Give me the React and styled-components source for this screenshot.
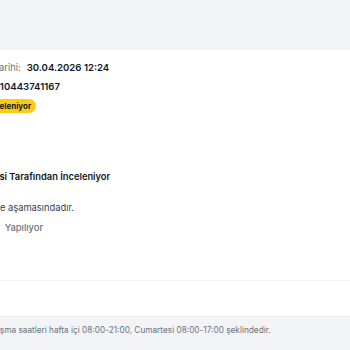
import React from "react";
import styled, { createGlobalStyle } from "styled-components";

const GlobalStyle = createGlobalStyle`
  body {
    margin: 0;
    background: #ffffff;
    font-family: Inter, "Noto Sans", "Liberation Sans", sans-serif;
  }
`;

const Page = styled.div`
  width: 350px;
  height: 350px;
  overflow: hidden;
  display: flex;
  flex-direction: column;
  background: #ffffff;
`;

const TopBar = styled.div`
  height: 50px;
  flex-shrink: 0;
  background: #f3f4f6;
`;

const Body = styled.div`
  height: 230px;
  flex-shrink: 0;
  margin-left: -45px;
  padding-top: 10px;
  box-sizing: border-box;
  display: flex;
  flex-direction: column;
`;

const InfoList = styled.div`
  display: flex;
  flex-direction: column;
  gap: 4px;
`;

const InfoRow = styled.div`
  display: flex;
  align-items: center;
  gap: ${(p) => p.$gap || 5}px;
  height: 15px;
  font-size: 9.33px;
  white-space: nowrap;
`;

const Label = styled.span`
  color: #6b7280;
`;

const Value = styled.span`
  color: #111827;
  font-size: 9.6px;
  font-weight: 600;
`;

const Badge = styled.span`
  display: inline-flex;
  align-items: center;
  height: 14px;
  padding: 0 5px;
  border-radius: 7px;
  background: #facc15;
  color: #111827;
  font-size: 8px;
  font-weight: 700;
`;

const Timeline = styled.div`
  margin-top: 56px;
  display: flex;
  gap: 6px;
  margin-left: -27px;
`;

const Marker = styled.div`
  width: 10px;
  height: 10px;
  margin-top: 2px;
  border-radius: 50%;
  background: #facc15;
  flex-shrink: 0;
`;

const Step = styled.div`
  display: flex;
  flex-direction: column;
  font-size: 9.33px;
  line-height: 15px;
  white-space: nowrap;
`;

const StepTitle = styled.div`
  color: #111827;
  font-weight: 600;
`;

const StepText = styled.div`
  margin-top: 16px;
  color: #374151;
`;

const StepStatus = styled.div`
  margin-top: 5px;
  display: flex;
  gap: 8px;
  color: #6b7280;
  font-weight: 500;
`;

const Divider = styled.div`
  height: 1px;
  flex-shrink: 0;
  background: #f3f4f6;
`;

const Actions = styled.div`
  height: 35px;
  flex-shrink: 0;
`;

const Footer = styled.div`
  flex: 1;
  background: #f3f4f6;
  border-top: 1px solid #eef0f3;
  padding-top: 8px;
  box-sizing: border-box;
  overflow: hidden;
`;

const FooterText = styled.p`
  margin: 0 0 0 -70px;
  font-size: 8.25px;
  line-height: 11px;
  color: #6b7280;
  white-space: nowrap;
`;

export default function App() {
  return (
    <>
      <GlobalStyle />
      <Page>
        <TopBar />
        <Body>
          <InfoList>
            <InfoRow $gap={6}>
              <Label>Başvuru Tarihi:</Label>
              <Value>30.04.2026 12:24</Value>
            </InfoRow>
            <InfoRow $gap={5}>
              <Label>Kayıt No:</Label>
              <Value>10443741167</Value>
            </InfoRow>
            <InfoRow $gap={2}>
              <Label>Statü:</Label>
              <Badge>İnceleniyor</Badge>
            </InfoRow>
          </InfoList>
          <Timeline>
            <Marker />
            <Step>
              <StepTitle>Teknik Servisi Tarafından İnceleniyor</StepTitle>
              <StepText>İade inceleme aşamasındadır.</StepText>
              <StepStatus>
                <span>Ön Kontrolü</span>
                <span>Yapılıyor</span>
              </StepStatus>
            </Step>
          </Timeline>
        </Body>
        <Divider />
        <Actions />
        <Footer>
          <FooterText>
            Çağrı merkezi çalışma saatleri hafta içi 08:00-21:00, Cumartesi
            08:00-17:00 şeklindedir.
          </FooterText>
        </Footer>
      </Page>
    </>
  );
}
